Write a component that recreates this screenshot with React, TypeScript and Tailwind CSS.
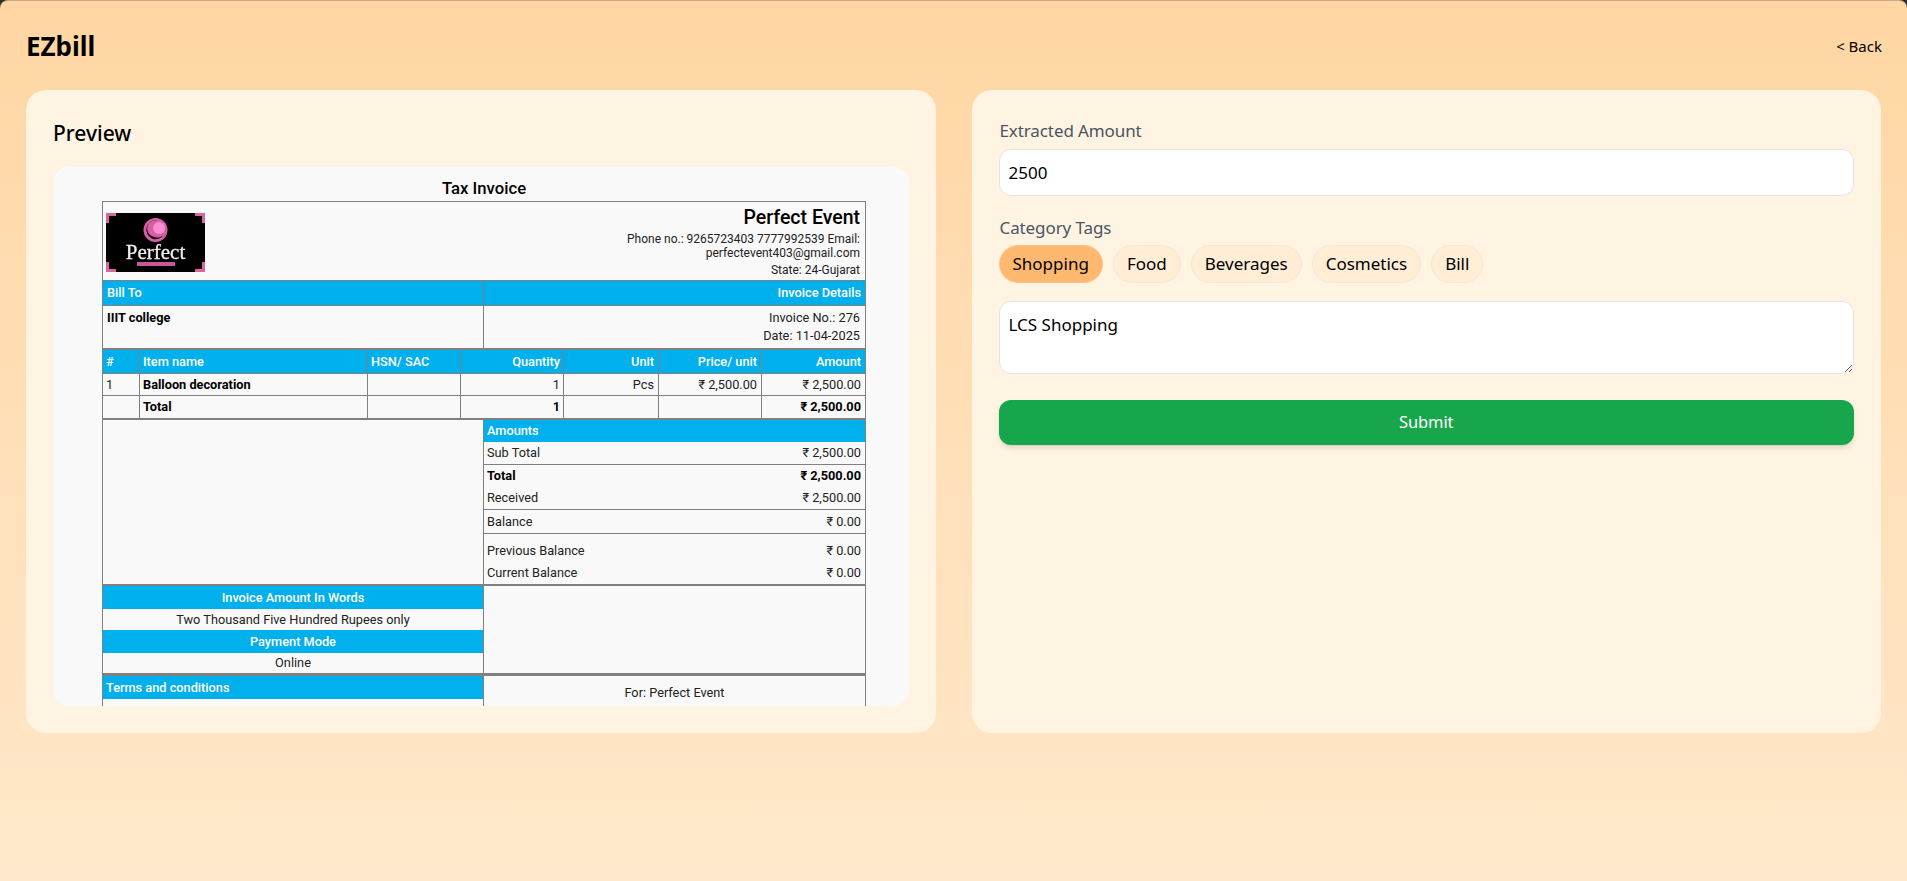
const uiFont = "font-['Noto_Sans',sans-serif]"

const Logo = () => (
    <svg width="99" height="59" viewBox="0 0 99 59" className="block blur-[0.3px]">
        <rect width="99" height="59" fill="#000" />
        <path d="M0 0h10v3H3v7H0zM99 0H89v3h7v7h3zM0 59h10v-3H3v-7H0zM99 59H89v-3h7v-7h3z" fill="#d9649f" />
        <circle cx="49.5" cy="17" r="12" fill="#d85fa6" />
        <path d="M52 7.5a9.5 9.5 0 1 0 6 14 9 9 0 0 1-11 2 8 8 0 0 1 5-16z" fill="#160810" />
        <circle cx="53" cy="15" r="6" fill="#f78fd2" />
        <text x="49.5" y="45.5" textAnchor="middle" fontSize="21" fill="#eeeeee" stroke="#eeeeee" strokeWidth="0.3" fontFamily="Liberation Serif, serif">Perfect</text>
        <rect x="31" y="49" width="38" height="4" fill="#c9589a" />
    </svg>
)

const blue = 'bg-[#00b0ec] text-white font-medium'

const ItemRow = ({ cells, className }: { cells: string[]; className: string }) => (
    <div className={`grid grid-cols-[37px_228px_93px_103px_95px_103px_1fr] ${className}`}>
        {cells.map((c, i) => (
            <div key={i} className={`flex items-center pl-[3px] border-[#808080] ${i < 6 ? 'border-r' : ''} ${i > 2 ? 'justify-end' : ''} ${i > 3 ? 'pr-[4px]' : 'pr-[3px]'}`}>
                {c}
            </div>
        ))}
    </div>
)

const AmountRow = ({ label, value, bold }: { label: string; value: string; bold?: boolean }) => (
    <div className={`flex flex-1 items-center justify-between pl-[3px] pr-[4px] ${bold ? 'font-bold text-black' : ''}`}>
        <span>{label}</span>
        <span>{value}</span>
    </div>
)

const Invoice = () => (
    <div className="font-['Roboto',sans-serif] text-[12.75px] text-[#222] w-[764px] ml-[49px]">
        <div className="h-[34px] pt-[10px] flex items-center justify-center text-[16.7px] leading-[20px] font-medium text-black">Tax Invoice</div>
        <div className="border-x border-t border-[#808080]">
            <div className="flex justify-between h-[79px] border-b border-[#808080] pl-[3px] pr-[5px]">
                <div className="pt-[11px]"><Logo /></div>
                <div className="text-right text-[12px] w-[300px] pt-[4px]">
                    <div className="text-[19.5px] font-medium text-black leading-[24px]">Perfect Event</div>
                    <div className="leading-[14px] mt-[2px]">Phone no.: 9265723403 7777992539 Email: perfectevent403@gmail.com</div>
                    <div className="leading-[14px] mt-[3px]">State: 24-Gujarat</div>
                </div>
            </div>
            <div className="grid grid-cols-[381px_1fr] border-b-2 border-[#808080]">
                <div className={`${blue} h-[24px] flex items-center px-[4px] border-r border-[#808080]`}>Bill To</div>
                <div className={`${blue} h-[24px] flex items-center justify-end px-[4px]`}>Invoice Details</div>
                <div className="h-[43px] border-t border-r border-[#808080] px-[4px] pt-[2px] font-bold text-black">IIIT college</div>
                <div className="h-[43px] border-t border-[#808080] text-right pr-[5px] pt-[3px] leading-[18px]">
                    <div>Invoice No.: 276</div>
                    <div>Date: 11-04-2025</div>
                </div>
            </div>
            <ItemRow className={`${blue} h-[24px] border-b border-[#808080]`} cells={['#', 'Item name', 'HSN/ SAC', 'Quantity', 'Unit', 'Price/ unit', 'Amount']} />
            <ItemRow className="h-[22px] border-b border-[#808080] [&>div:nth-child(2)]:font-bold [&>div:nth-child(2)]:text-black" cells={['1', 'Balloon decoration', '', '1', 'Pcs', '₹ 2,500.00', '₹ 2,500.00']} />
            <ItemRow className="h-[24px] border-b-2 border-[#808080] font-bold text-black" cells={['', 'Total', '', '1', '', '', '₹ 2,500.00']} />
            <div className="grid grid-cols-[381px_1fr] border-b-2 border-[#808080] h-[166px]">
                <div className="border-r border-[#808080]"></div>
                <div className="flex flex-col">
                    <div className={`${blue} h-[22px] flex items-center px-[3px]`}>Amounts</div>
                    <div className="h-[23px] flex border-b border-[#808080]"><AmountRow label="Sub Total" value="₹ 2,500.00" /></div>
                    <div className="h-[45px] flex flex-col border-b border-[#808080]">
                        <AmountRow label="Total" value="₹ 2,500.00" bold />
                        <AmountRow label="Received" value="₹ 2,500.00" />
                    </div>
                    <div className="h-[24px] flex border-b border-[#808080]"><AmountRow label="Balance" value="₹ 0.00" /></div>
                    <div className="flex-1 flex flex-col pt-[6px]">
                        <AmountRow label="Previous Balance" value="₹ 0.00" />
                        <AmountRow label="Current Balance" value="₹ 0.00" />
                    </div>
                </div>
            </div>
            <div className="grid grid-cols-[381px_1fr] border-b-[3px] border-[#808080] h-[90px]">
                <div className="flex flex-col border-r border-[#808080] text-center">
                    <div className={`${blue} h-[23px] flex items-center justify-center`}>Invoice Amount In Words</div>
                    <div className="h-[21px] flex items-center justify-center">Two Thousand Five Hundred Rupees only</div>
                    <div className={`${blue} h-[23px] flex items-center justify-center`}>Payment Mode</div>
                    <div className="flex-1 flex items-center justify-center">Online</div>
                </div>
                <div></div>
            </div>
            <div className="grid grid-cols-[381px_1fr] h-[60px]">
                <div className="border-r border-[#808080]">
                    <div className={`${blue} h-[23px] flex items-center px-[3px]`}>Terms and conditions</div>
                </div>
                <div className="text-center pt-[7px]">For: Perfect Event</div>
            </div>
        </div>
    </div>
)

const tags = ['Shopping', 'Food', 'Beverages', 'Cosmetics', 'Bill']

export default function App() {
    return (
        <div className="bg-[#2d2d2d]">
            <div className={`h-[881px] rounded-t-[8px] border-t border-[#c9ab85] bg-gradient-to-b from-[#ffd6a3] to-[#ffe8cb] px-[26px] ${uiFont} text-black`}>
                <header className="flex items-center justify-between h-[89px] pt-[2px]">
                    <h1 className="text-[26px] font-bold">EZbill</h1>
                    <a className="text-[15px] mr-[-1px]">&lt; Back</a>
                </header>
                <div className="grid grid-cols-2 gap-[36px]">
                    <section className="bg-[#fff3e2] rounded-[20px] h-[643px] px-[27px] pt-[28px]">
                        <h2 className="text-[21px] font-medium leading-[30px]">Preview</h2>
                        <div className="mt-[19px] h-[539px] overflow-hidden rounded-[16px] bg-[#f9f9f9]">
                            <Invoice />
                        </div>
                    </section>
                    <section className="bg-[#fff3e2] rounded-[20px] h-[643px] px-[27px] pt-[28px]">
                        <label className="block pl-[1px] text-[17px] tracking-[-0.1px] text-[#4a5565] leading-[26px]">Extracted Amount</label>
                        <input readOnly value="2500" className="mt-[5px] block w-full h-[47px] rounded-[12px] border border-[#e5e3e6] bg-white px-[9px] text-[17px] outline-none" />
                        <label className="block pl-[1px] mt-[19px] text-[17px] tracking-[-0.1px] text-[#4a5565] leading-[26px]">Category Tags</label>
                        <div className="flex gap-[10px] mt-[4px]">
                            {tags.map((t, i) => (
                                <button key={t} className={`h-[38px] px-[13px] rounded-full border text-[17px] ${i === 0 ? 'bg-[#ffb86f] border-[#ffc38a]' : 'bg-[#ffedd6] border-[#f5e6d6]'}`}>{t}</button>
                            ))}
                        </div>
                        <textarea readOnly value="LCS Shopping" className="mt-[18px] block w-full h-[73px] rounded-[12px] border border-[#e5e3e6] bg-white px-[9px] py-[10px] text-[17px] outline-none" />
                        <button className="mt-[26px] block w-full h-[45px] rounded-[12px] bg-[#18a64c] text-white text-[16.5px] tracking-[-0.1px] shadow-md">Submit</button>
                    </section>
                </div>
            </div>
        </div>
    )
}
